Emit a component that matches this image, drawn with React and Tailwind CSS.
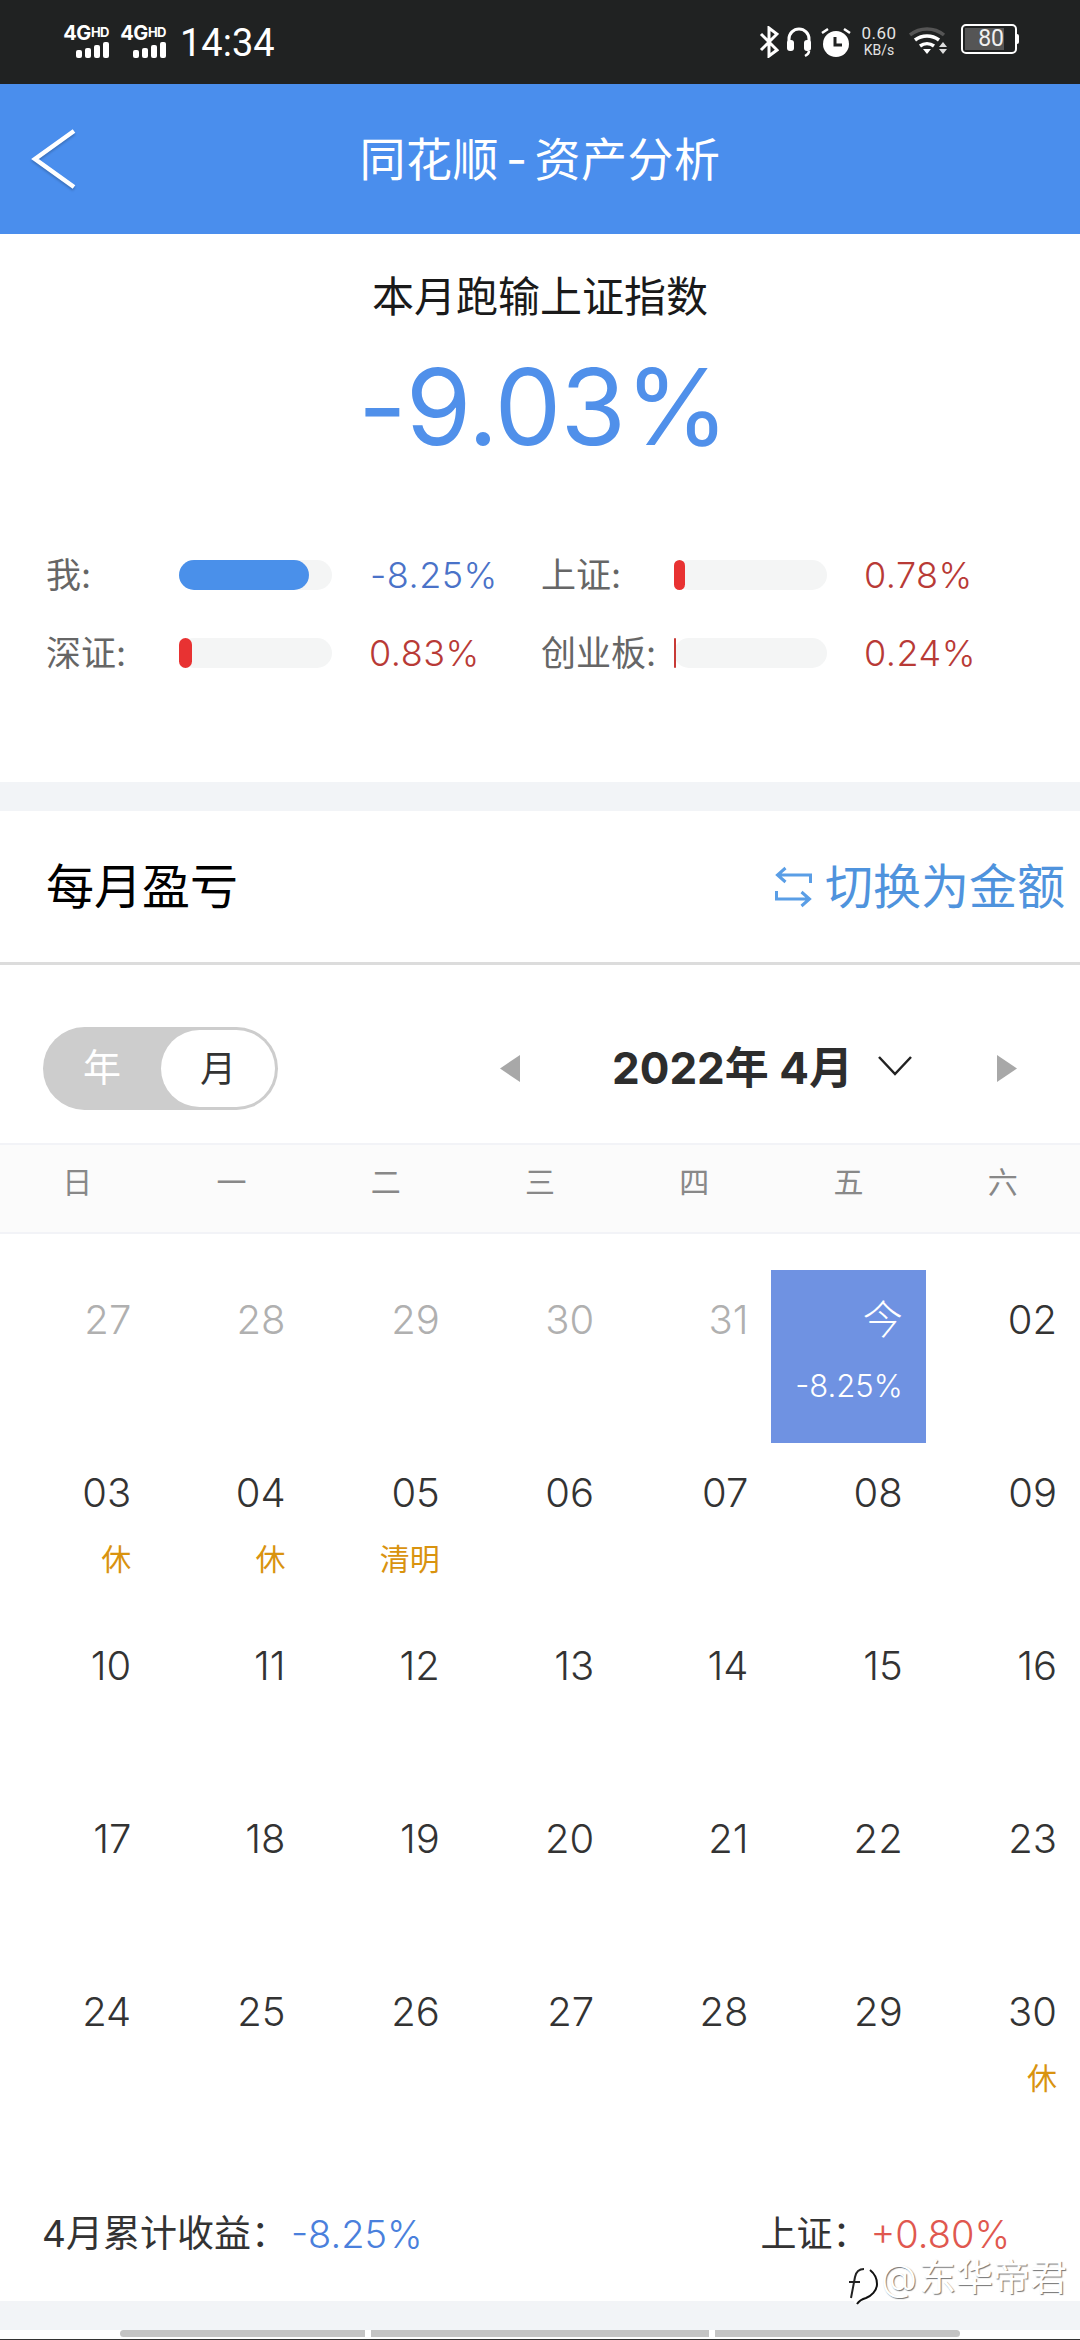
const font = "font-['Inter','Noto_Sans_CJK_SC',sans-serif]";

const stats = [
  { label: "我:", width: 130, bar: "bg-[#4a90ea]", value: "-8.25%", color: "text-[#4a72c8]", gap: "ml-[38px]" },
  { label: "上证:", width: 11, bar: "bg-[#e83232]", value: "0.78%", color: "text-[#b83a36]", gap: "ml-[37px]" },
  { label: "深证:", width: 13, bar: "bg-[#e83232]", value: "0.83%", color: "text-[#b83a36]", gap: "ml-[37px]" },
  { label: "创业板:", width: 2, bar: "bg-[#c83a36]", value: "0.24%", color: "text-[#b83a36]", gap: "ml-[37px]" },
];

const weekdays = ["日", "一", "二", "三", "四", "五", "六"];

const days = [
  { n: "27", old: true }, { n: "28", old: true }, { n: "29", old: true }, { n: "30", old: true }, { n: "31", old: true },
  { n: "今", today: true, sub: "-8.25%" }, { n: "02" },
  { n: "03", sub: "休" }, { n: "04", sub: "休" }, { n: "05", sub: "清明" }, { n: "06" }, { n: "07" }, { n: "08" }, { n: "09" },
  { n: "10" }, { n: "11" }, { n: "12" }, { n: "13" }, { n: "14" }, { n: "15" }, { n: "16" },
  { n: "17" }, { n: "18" }, { n: "19" }, { n: "20" }, { n: "21" }, { n: "22" }, { n: "23" },
  { n: "24" }, { n: "25" }, { n: "26" }, { n: "27" }, { n: "28" }, { n: "29" }, { n: "30", sub: "休" },
];

function Signal() {
  return (
    <div className="flex flex-col items-end w-[47px]">
      <div className="text-[20px] leading-[15px] font-bold text-white tracking-[-0.5px] whitespace-nowrap">
        4G<span className="text-[13px] align-[3px]">HD</span>
      </div>
      <div className="flex items-end gap-[3px] mt-[1px]">
        <div className="w-[6px] h-[8px] bg-white rounded-[2px]" />
        <div className="w-[6px] h-[10px] bg-white rounded-[2px]" />
        <div className="w-[6px] h-[13px] bg-white rounded-[2px]" />
        <div className="w-[6px] h-[16px] bg-white rounded-[2px]" />
      </div>
    </div>
  );
}

function StatusBar() {
  return (
    <div className="h-[84px] bg-[#202222] flex items-start pt-[24px] text-white">
      <div className="ml-[62px] flex gap-[10px] mt-[1px]">
        <Signal />
        <Signal />
      </div>
      <div className="ml-[14px] text-[38px] leading-[38px] font-['Roboto']">14:34</div>
      <div className="ml-auto mr-[61px] flex items-start">
        <svg width="20" height="32" viewBox="0 0 20 32" fill="none" stroke="white" strokeWidth="3" className="mt-[2px]">
          <path d="M2 8l16 16-8 6V2l8 6L2 24" />
        </svg>
        <svg width="26" height="32" viewBox="0 0 26 32" fill="none" className="ml-[7px] mt-[2px]">
          <path d="M3 18V13a10 10 0 0 1 20 0v5" stroke="white" strokeWidth="3" />
          <rect x="1" y="14" width="7" height="11" rx="3" fill="white" />
          <rect x="18" y="14" width="7" height="11" rx="3" fill="white" />
          <path d="M23 25c0 3-2 4-4 5" stroke="white" strokeWidth="2.5" />
        </svg>
        <svg width="32" height="32" viewBox="0 0 32 32" fill="none" className="ml-[8px] mt-[2px]">
          <circle cx="16" cy="18" r="13" fill="white" />
          <path d="M15 11v8h7" stroke="#202222" strokeWidth="3" />
          <path d="M2 7l6-4M30 7l-6-4" stroke="white" strokeWidth="2.5" />
        </svg>
        <div className="ml-[8px] w-[38px] text-center text-[#e4e4e4] font-['Roboto']">
          <div className="text-[17px] leading-[18px] tracking-[0.5px]">0.60</div>
          <div className="text-[14px] leading-[15px] mt-[1px]">KB/s</div>
        </div>
        <svg width="40" height="30" viewBox="0 0 40 30" fill="none" className="ml-[11px] mt-[2px]">
          <path d="M1 9a27 27 0 0 1 34 0" stroke="#555" strokeWidth="3.5" />
          <path d="M6 14a20 20 0 0 1 24 0" stroke="white" strokeWidth="3.5" />
          <path d="M11 20a12 12 0 0 1 14 0" stroke="white" strokeWidth="3.5" />
          <path d="M14 23h8l-4 5z" fill="white" />
          <path d="M34 16l4 5h-8zM30 23h8l-4 5z" fill="#ddd" />
        </svg>
        <div className="ml-[12px] flex items-center h-[30px]">
          <div className="w-[56px] h-[30px] rounded-[5px] border-[2px] border-white p-[2px]">
            <div className="w-[39px] h-full bg-[#555] text-right text-[23px] leading-[22px] text-[#f0f0f0] font-['Roboto']">80</div>
          </div>
          <div className="w-[2px] h-[10px] bg-white rounded-r" />
        </div>
      </div>
    </div>
  );
}

function Header() {
  return (
    <div className="h-[150px] bg-[#4a8eed] flex items-center">
      <div className="w-[120px] pl-[30px]">
        <svg width="48" height="62" viewBox="0 0 48 62" fill="none" className="drop-shadow-[0_2px_1px_rgba(0,0,0,0.2)]">
          <path d="M44 3L5 31l39 28" stroke="white" strokeWidth="4.5" />
        </svg>
      </div>
      <div className="flex-1 text-center text-white text-[46px] leading-[56px] tracking-[0.5px]">
        同花顺<span className="mx-[7px]">-</span>资产分析
      </div>
      <div className="w-[120px]" />
    </div>
  );
}

function Summary() {
  return (
    <div className="h-[548px] pt-[39px]">
      <div className="text-center text-[42px] leading-[48px] text-[#1a1a1a]">本月跑输上证指数</div>
      <div className="mt-[26px] pl-[6px] text-center text-[106px] leading-[120px] font-normal tracking-[-1px] text-[#5090ea]">-9.03%</div>
      <div className="mt-[93px] ml-[46px] grid grid-cols-[495px_1fr] gap-y-[48px]">
        {stats.map((s) => (
          <div key={s.label} className="flex items-center h-[30px]">
            <div className="w-[133px] text-[35px] leading-[40px] text-[#666] whitespace-nowrap">{s.label}</div>
            <div className="w-[153px] h-[30px] bg-[#f4f5f5] rounded-[15px]">
              <div className={`h-[30px] rounded-[15px] ${s.bar}`} style={{ width: s.width }} />
            </div>
            <div className={`${s.gap} text-[36px] leading-[40px] font-light tracking-[0.5px] ${s.color}`}>{s.value}</div>
          </div>
        ))}
      </div>
    </div>
  );
}

function Band() {
  return <div className="h-[29px] bg-[#f2f4f7]" />;
}

function MonthTitle() {
  return (
    <div className="h-[154px] border-b-[3px] border-[#dcdcdc] flex items-center pl-[46px] pr-[15px]">
      <div className="text-[48px] leading-[60px] text-black">每月盈亏</div>
      <div className="ml-auto flex items-center gap-[11px] text-[#4f93dd]">
        <svg width="41" height="42" viewBox="0 0 40 42" fill="none" stroke="#5a9ee6" strokeWidth="3">
          <path d="M12 2L4 9l8 7M4 9h33v8" />
          <path d="M28 40l8-7-8-7M36 33H3v-8" />
        </svg>
        <div className="text-[48px] leading-[60px] w-[240px] whitespace-nowrap">切换为金额</div>
      </div>
    </div>
  );
}

function MonthPicker() {
  return (
    <div className="h-[178px] flex items-start pt-[62px] pl-[43px]">
      <div className="w-[235px] h-[83px] rounded-[42px] bg-[#cdcdcd] flex items-center">
        <div className="w-[118px] mb-[3px] text-center text-[38px] leading-[44px] text-white">年</div>
        <div className="w-[114px] h-[77px] rounded-[39px] bg-white flex items-center justify-center text-[36px] leading-[44px] text-[#333]">月</div>
      </div>
      <div className="w-[20px] h-[27px] ml-[222px] mt-[28px] bg-[#a8a8a8] [clip-path:polygon(100%_0,0_50%,100%_100%)]" />
      <div className="ml-[92px] mt-[14px] text-[44px] leading-[54px] font-bold text-[#2d2d2d] whitespace-nowrap w-[240px]">2022年 4月</div>
      <svg width="34" height="20" viewBox="0 0 34 20" fill="none" stroke="#222" strokeWidth="2.5" className="ml-[26px] mt-[29px]">
        <path d="M1 1l16 17L33 1" />
      </svg>
      <div className="w-[20px] h-[27px] ml-[85px] mt-[28px] bg-[#a8a8a8] [clip-path:polygon(0_0,100%_50%,0_100%)]" />
    </div>
  );
}

function WeekHeader() {
  return (
    <div className="h-[91px] bg-[#fbfbfb] border-y-[2px] border-[#f2f3f7] grid grid-cols-7 items-center pb-[14px]">
      {weekdays.map((d) => (
        <div key={d} className="text-center text-[30px] leading-[40px] text-[#888]">{d}</div>
      ))}
    </div>
  );
}

function Calendar() {
  return (
    <div className="pt-[36px] grid grid-cols-7">
      {days.map((d, i) => (
        <div
          key={i}
          className={`h-[173px] pt-[26px] pr-[23px] flex flex-col items-end ${d.today ? "bg-[#6f92e2]" : ""}`}
        >
          <div className={`text-[40px] leading-[48px] font-light ${d.today ? "text-white" : d.old ? "text-[#b0b0b0]" : "text-[#333]"}`}>{d.n}</div>
          {d.sub && (
            <div className={`mt-[22px] leading-[40px] ${d.today ? "text-[31px] font-light text-white" : "text-[30px] text-[#d9930f]"}`}>{d.sub}</div>
          )}
        </div>
      ))}
    </div>
  );
}

function Watermark() {
  return (
    <div className="absolute left-[842px] top-[123px] flex items-start text-[37px] leading-[40px] text-white [text-shadow:1px_1px_1px_rgba(0,0,0,0.55)]">
      <svg width="36" height="38" viewBox="0 0 36 38" fill="none" className="mt-[9px]">
        <path d="M18 1C8 1 1 8 1 18c0 6 4 10 9 12l3 7 7-6c8-2 14-7 14-14C34 8 28 1 18 1z" fill="white" />
        <path d="M28 3c5 4 7 9 7 14 0 7-6 12-11 14-4 1-7 3-9 6" stroke="#111" strokeWidth="2" />
        <path d="M22 2c-6 0-8 3-9 8l-4 21M7 15h11" stroke="#222" strokeWidth="2" />
      </svg>
      <span className="ml-[3px] font-light">@</span>
      <span className="ml-[2px]">东华帝君</span>
    </div>
  );
}

function Footer() {
  return (
    <div className="h-[166px] relative flex items-start pt-[77px] pl-[42px] pr-[70px] text-[37px] leading-[44px] text-[#333]">
      <div>4月累计收益：</div>
      <div className="ml-[3px] font-light text-[38px] text-[#4a80dc]">-8.25%</div>
      <div className="ml-auto text-[36px]">上证：</div>
      <div className="ml-[2px] font-light text-[38px] text-[#e0584f]">+0.80%</div>
      <Watermark />
    </div>
  );
}

function ScrollHint() {
  return (
    <div className="h-[10px] bg-white border-b border-[#333] flex items-start pl-[120px] gap-[6px]">
      <div className="w-[245px] h-[7px] bg-[#c4c4c4] rounded-l-[4px]" />
      <div className="w-[338px] h-[7px] bg-[#c4c4c4]" />
      <div className="w-[245px] h-[7px] bg-[#c4c4c4] rounded-r-[4px]" />
    </div>
  );
}

export default function App() {
  return (
    <div className={`w-[1080px] h-[2340px] bg-white overflow-hidden ${font}`}>
      <StatusBar />
      <Header />
      <Summary />
      <Band />
      <MonthTitle />
      <MonthPicker />
      <WeekHeader />
      <Calendar />
      <Footer />
      <Band />
      <ScrollHint />
    </div>
  );
}
